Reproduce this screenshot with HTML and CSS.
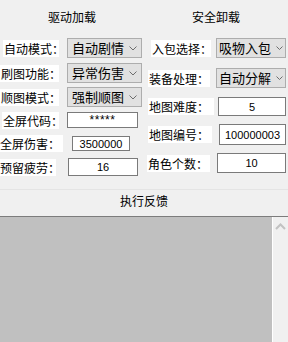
FILE: index.html
```html
<!DOCTYPE html>
<html lang="zh">
<head>
<meta charset="utf-8">
<link rel="stylesheet" href="styles.css">
</head>
<body>
<div class="panel">
  <div class="col col-left">
    <div class="title">驱动加载</div>
    <div class="row l1"><span class="lbl">自动模式：</span><div class="combo"><span class="ctext">自动剧情</span><svg class="chev" width="8" height="5" viewBox="0 0 8 5"><polyline points="0.5,0.5 4,4 7.5,0.5" fill="none" stroke="#6d6d6d" stroke-width="1"/></svg></div></div>
    <div class="row l2"><span class="lbl">刷图功能：</span><div class="combo"><span class="ctext">异常伤害</span><svg class="chev" width="8" height="5" viewBox="0 0 8 5"><polyline points="0.5,0.5 4,4 7.5,0.5" fill="none" stroke="#6d6d6d" stroke-width="1"/></svg></div></div>
    <div class="row l3"><span class="lbl">顺图模式：</span><div class="combo"><span class="ctext">强制顺图</span><svg class="chev" width="8" height="5" viewBox="0 0 8 5"><polyline points="0.5,0.5 4,4 7.5,0.5" fill="none" stroke="#6d6d6d" stroke-width="1"/></svg></div></div>
    <div class="row l4"><span class="lbl">全屏代码：</span><div class="field stars">*****</div></div>
    <div class="row l5"><span class="lbl">全屏伤害：</span><div class="field">3500000</div></div>
    <div class="row l6"><span class="lbl">预留疲劳：</span><div class="field">16</div></div>
  </div>
  <div class="col col-right">
    <div class="title">安全卸载</div>
    <div class="row r1"><span class="lbl">入包选择：</span><div class="combo"><span class="ctext">吸物入包</span><svg class="chev" width="7" height="5" viewBox="0 0 7 5"><polyline points="0.5,0.5 3.5,3.5 6.5,0.5" fill="none" stroke="#6d6d6d" stroke-width="1"/></svg></div></div>
    <div class="row r2"><span class="lbl">装备处理：</span><div class="combo"><span class="ctext">自动分解</span><svg class="chev" width="7" height="5" viewBox="0 0 7 5"><polyline points="0.5,0.5 3.5,3.5 6.5,0.5" fill="none" stroke="#6d6d6d" stroke-width="1"/></svg></div></div>
    <div class="row r3"><span class="lbl">地图难度：</span><div class="field">5</div></div>
    <div class="row r4"><span class="lbl">地图编号：</span><div class="field">100000003</div></div>
    <div class="row r5"><span class="lbl">角色个数：</span><div class="field">10</div></div>
  </div>
</div>
<div class="feedback-head">执行反馈</div>
<div class="log">
  <div class="log-area"></div>
  <div class="scroll"><svg width="11" height="7" viewBox="0 0 11 7"><polyline points="1,6 5.5,1.5 10,6" fill="none" stroke="#c2c2c2" stroke-width="2"/></svg></div>
</div>
</body>
</html>
```
FILE: styles.css
```css
html, body {
  margin: 0;
  padding: 0;
  background: #f0f0f0;
}
body {
  width: 288px;
  height: 342px;
  overflow: hidden;
  font-family: "Noto Sans CJK SC", "Noto Sans", sans-serif;
  font-size: 12px;
  color: #000;
}
.panel {
  display: grid;
  grid-template-columns: 144px 144px;
  height: 189px;
}
.col {
  display: flex;
  flex-direction: column;
}
.title {
  height: 38px;
  line-height: 34px;
  text-align: center;
  font-size: 12px;
}
.row {
  display: flex;
  align-items: center;
}
.lbl {
  background: #fff;
  height: 17px;
  line-height: 17px;
  font-size: 12px;
  white-space: nowrap;
  box-sizing: border-box;
}
.combo {
  box-sizing: border-box;
  height: 100%;
  background: #e1e1e1;
  border: 1px solid #adadad;
  font-size: 13px;
  line-height: 18px;
  padding: 0 4px 0 4px;
  display: flex;
  align-items: center;
  justify-content: space-between;
  white-space: nowrap;
  overflow: hidden;
}
.col-right .combo {
  padding: 0 2px 0 2px;
}
.ctext {
  flex-shrink: 0;
}
.chev {
  flex-shrink: 0;
  display: block;
}
.field {
  box-sizing: border-box;
  height: 100%;
  background: #fff;
  border: 1px solid #7a7a7a;
  font-family: "Liberation Sans", Arial, sans-serif;
  font-size: 11px;
  display: flex;
  align-items: center;
  justify-content: center;
  white-space: nowrap;
}
.stars {
  font-size: 12px;
  letter-spacing: 0.5px;
}
/* left column rows */
.l1 { height: 20px; }
.l1 .lbl { margin-left: 3px; width: 56px; padding-left: 1px; }
.l1 .combo { margin-left: 8px; width: 75px; }
.l2 { height: 20px; margin-top: 5px; }
.l2 .lbl { margin-left: 0; width: 59px; padding-left: 1px; }
.l2 .combo { margin-left: 8px; width: 75px; }
.l3 { height: 20px; margin-top: 4px; }
.l3 .lbl { margin-left: 0; width: 59px; padding-left: 1px; }
.l3 .combo { margin-left: 8px; width: 75px; }
.l4 { height: 16px; margin-top: 5px; }
.l4 .lbl { margin-left: 2px; width: 57px; padding-left: 1px; }
.l4 .field { margin-left: 8px; width: 71px; }
.l5 { height: 15px; margin-top: 8px; }
.l5 .lbl { margin-left: 0; width: 63px; }
.l5 .field { margin-left: 9px; width: 58px; }
.l6 { height: 18px; margin-top: 7px; }
.l6 .lbl { margin-left: 0; width: 56px; }
.l6 .field { margin-left: 12px; width: 70px; }
/* right column rows */
.r1 { height: 20px; }
.r1 .lbl { margin-left: 7px; width: 60px; padding-left: 1px; }
.r1 .combo { margin-left: 5px; width: 70px; }
.r2 { height: 20px; margin-top: 10px; }
.r2 .lbl { margin-left: 4px; width: 62px; padding-left: 1px; }
.r2 .combo { margin-left: 6px; width: 70px; }
.r3 { height: 19px; margin-top: 9px; }
.r3 .lbl { margin-left: 4px; width: 66px; padding-left: 1px; }
.r3 .field { margin-left: 4px; width: 68px; }
.r4 { height: 21px; margin-top: 8px; }
.r4 .lbl { margin-left: 4px; width: 64px; padding-left: 1px; }
.r4 .field { margin-left: 7px; width: 67px; }
.r5 { height: 20px; margin-top: 8px; }
.r5 .lbl { margin-left: 3px; width: 63px; padding-left: 1px; }
.r5 .field { margin-left: 7px; width: 69px; }
.feedback-head {
  height: 26px;
  border-top: 1px solid #e4e4e4;
  border-bottom: 1px solid #7c7c7c;
  text-align: center;
  line-height: 22px;
  font-size: 12px;
}
.log {
  display: flex;
  height: 125px;
}
.log-area {
  width: 272px;
  background: #c0c0c0;
  border-right: 1px solid #fff;
}
.scroll {
  flex: 1;
  background: #f0f0f0;
  display: flex;
  justify-content: center;
  padding-top: 6px;
  box-sizing: border-box;
}
.scroll svg { display: block; }
```
